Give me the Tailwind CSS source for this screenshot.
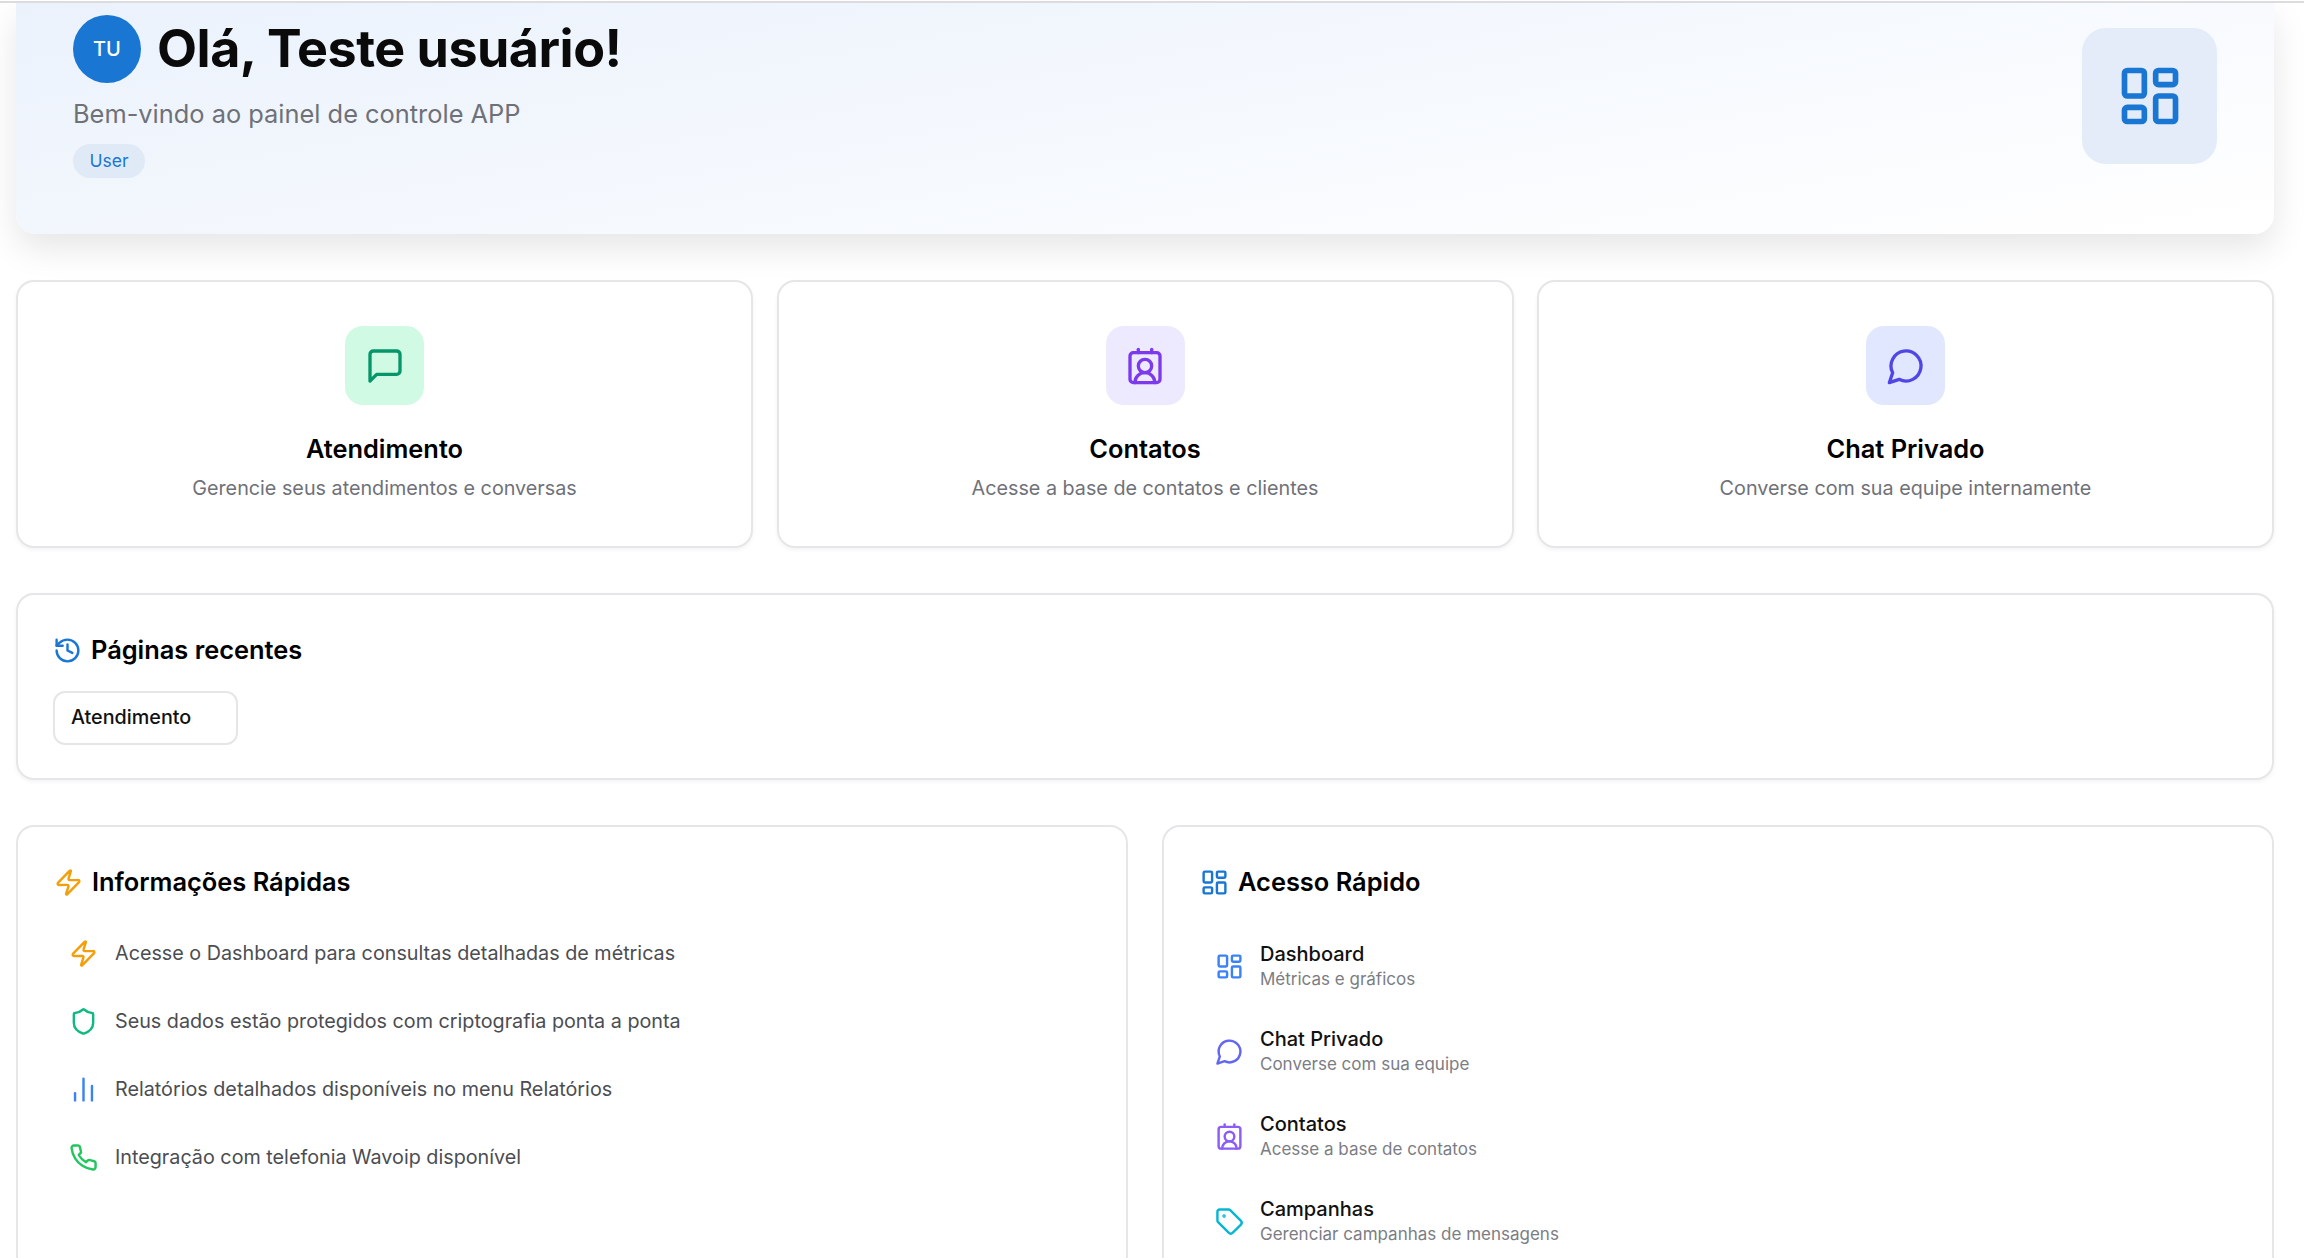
<!DOCTYPE html>
<html lang="pt-BR">
<head>
    <meta charset="UTF-8">
    <meta name="viewport" content="width=device-width, initial-scale=1.0">
    <title>Painel</title>
    <script src="https://cdn.jsdelivr.net/npm/@tailwindcss/browser@4"></script>
</head>
<body class="h-screen overflow-hidden bg-white font-[Inter,sans-serif] text-black">
    <div class="h-[3px] bg-white border-b-2 border-[#dcdcde] relative z-10"></div>

    <div class="h-[1255px] overflow-hidden pl-[16px] pr-[30px]">
        <!-- hero -->
        <section class="h-[231px] rounded-b-[20px] bg-linear-[170deg] from-[#ebf2fc] to-white shadow-[0_14px_34px_rgba(0,0,0,0.10)] pl-[57px] pr-[57px] flex justify-between items-start">
            <div class="pt-[12px]">
                <div class="flex items-center gap-[16px]">
                    <div class="w-[68px] h-[68px] rounded-full bg-[#1976d2] text-white flex items-center justify-center text-[20px] font-medium">TU</div>
                    <h1 class="text-[52px] leading-[68px] font-bold tracking-[-0.5px] text-[#0a0a0a]">Olá, Teste usuário!</h1>
                </div>
                <p class="mt-[15px] text-[25.4px] leading-[32px] text-[#6f7178]">Bem-vindo ao painel de controle APP</p>
                <span class="mt-[14px] h-[34px] w-[72px] rounded-full bg-[#e0eaf7] text-[#1976d2] text-[17.5px] flex items-center justify-center">User</span>
            </div>
            <div class="mt-[25px] w-[135px] h-[136px] rounded-[24px] bg-[#e3ecf8] flex items-center justify-center">
                <svg class="w-[68px] h-[68px] text-[#1976d2]" viewBox="0 0 24 24" fill="none" stroke="currentColor" stroke-width="2" stroke-linecap="round" stroke-linejoin="round"><rect width="7" height="9" x="3" y="3" rx="1"/><rect width="7" height="5" x="14" y="3" rx="1"/><rect width="7" height="9" x="14" y="12" rx="1"/><rect width="7" height="5" x="3" y="16" rx="1"/></svg>
            </div>
        </section>

        <!-- atalhos -->
        <div class="mt-[46px] grid grid-cols-3 gap-[23.5px]">
            <div class="h-[268px] rounded-[18px] border-2 border-[#e6e6e8] shadow-[0_2px_4px_rgba(0,0,0,0.05)] flex flex-col items-center pt-[44px]">
                <div class="w-[79px] h-[79px] rounded-[18px] bg-[#d1fae5] flex items-center justify-center">
                    <svg class="w-[40px] h-[40px] text-[#059669]" viewBox="0 0 24 24" fill="none" stroke="currentColor" stroke-width="2" stroke-linecap="round" stroke-linejoin="round"><path d="M21 15a2 2 0 0 1-2 2H7l-4 4V5a2 2 0 0 1 2-2h14a2 2 0 0 1 2 2z"/></svg>
                </div>
                <h3 class="mt-[27px] text-[25.4px] leading-[34px] font-semibold">Atendimento</h3>
                <p class="mt-[7px] text-[19.75px] leading-[30px] text-[#6f7178]">Gerencie seus atendimentos e conversas</p>
            </div>
            <div class="h-[268px] rounded-[18px] border-2 border-[#e6e6e8] shadow-[0_2px_4px_rgba(0,0,0,0.05)] flex flex-col items-center pt-[44px]">
                <div class="w-[79px] h-[79px] rounded-[18px] bg-[#ede9fe] flex items-center justify-center">
                    <svg class="w-[40px] h-[40px] text-[#7c3aed]" viewBox="0 0 24 24" fill="none" stroke="currentColor" stroke-width="2" stroke-linecap="round" stroke-linejoin="round"><path d="M16 2v2"/><path d="M17.915 22a6 6 0 0 0-12 0"/><path d="M8 2v2"/><circle cx="12" cy="12" r="4"/><rect x="3" y="4" width="18" height="18" rx="2"/></svg>
                </div>
                <h3 class="mt-[27px] text-[25.4px] leading-[34px] font-semibold">Contatos</h3>
                <p class="mt-[7px] text-[19.75px] leading-[30px] text-[#6f7178]">Acesse a base de contatos e clientes</p>
            </div>
            <div class="h-[268px] rounded-[18px] border-2 border-[#e6e6e8] shadow-[0_2px_4px_rgba(0,0,0,0.05)] flex flex-col items-center pt-[44px]">
                <div class="w-[79px] h-[79px] rounded-[18px] bg-[#e0e7ff] flex items-center justify-center">
                    <svg class="w-[40px] h-[40px] text-[#4f46e5]" viewBox="0 0 24 24" fill="none" stroke="currentColor" stroke-width="2" stroke-linecap="round" stroke-linejoin="round"><path d="M7.9 20A9 9 0 1 0 4 16.1L2 22Z"/></svg>
                </div>
                <h3 class="mt-[27px] text-[25.4px] leading-[34px] font-semibold">Chat Privado</h3>
                <p class="mt-[7px] text-[19.75px] leading-[30px] text-[#6f7178]">Converse com sua equipe internamente</p>
            </div>
        </div>

        <!-- recentes -->
        <section class="mt-[45px] h-[187px] rounded-[18px] border-2 border-[#e6e6e8] shadow-[0_2px_4px_rgba(0,0,0,0.05)] px-[35px] pt-[38px]">
            <div class="flex items-center gap-[9px]">
                <svg class="w-[29px] h-[29px] text-[#1976d2]" viewBox="0 0 24 24" fill="none" stroke="currentColor" stroke-width="2" stroke-linecap="round" stroke-linejoin="round"><path d="M3 12a9 9 0 1 0 9-9 9.75 9.75 0 0 0-6.74 2.74L3 8"/><path d="M3 3v5h5"/><path d="M12 7v5l4 2"/></svg>
                <h2 class="text-[25.4px] leading-[34px] font-semibold">Páginas recentes</h2>
            </div>
            <button class="mt-[24px] block w-[185px] h-[54px] rounded-[12px] border-2 border-[#e6e6e8] pl-[16px] text-left text-[19.75px] font-medium text-[#111]">Atendimento</button>
        </section>

        <!-- informacoes e acesso -->
        <div class="mt-[45px] grid grid-cols-2 gap-[34px]">
            <section class="h-[520px] rounded-[18px] border-2 border-[#e6e6e8] px-[36px] pt-[38px]">
                <div class="flex items-center gap-[9px]">
                    <svg class="w-[29px] h-[29px] text-[#f59e0b]" viewBox="0 0 24 24" fill="none" stroke="currentColor" stroke-width="2" stroke-linecap="round" stroke-linejoin="round"><path d="M4 14a1 1 0 0 1-.78-1.63l9.9-10.2a.5.5 0 0 1 .86.46l-1.92 6.02A1 1 0 0 0 13 10h7a1 1 0 0 1 .78 1.63l-9.9 10.2a.5.5 0 0 1-.86-.46l1.92-6.02A1 1 0 0 0 11 14z"/></svg>
                    <h2 class="text-[25.4px] leading-[34px] font-semibold">Informações Rápidas</h2>
                </div>
                <ul class="mt-[39px] pl-[15px] flex flex-col gap-[37px] text-[19.75px] leading-[31px] text-[#4b4d52]">
                    <li class="flex items-center gap-[17px]">
                        <svg class="w-[29px] h-[29px] text-[#f59e0b]" viewBox="0 0 24 24" fill="none" stroke="currentColor" stroke-width="2" stroke-linecap="round" stroke-linejoin="round"><path d="M4 14a1 1 0 0 1-.78-1.63l9.9-10.2a.5.5 0 0 1 .86.46l-1.92 6.02A1 1 0 0 0 13 10h7a1 1 0 0 1 .78 1.63l-9.9 10.2a.5.5 0 0 1-.86-.46l1.92-6.02A1 1 0 0 0 11 14z"/></svg>
                        Acesse o Dashboard para consultas detalhadas de métricas
                    </li>
                    <li class="flex items-center gap-[17px]">
                        <svg class="w-[29px] h-[29px] text-[#10b981]" viewBox="0 0 24 24" fill="none" stroke="currentColor" stroke-width="2" stroke-linecap="round" stroke-linejoin="round"><path d="M20 13c0 5-3.5 7.5-7.66 8.95a1 1 0 0 1-.67-.01C7.5 20.5 4 18 4 13V6a1 1 0 0 1 1-1c2 0 4.5-1.2 6.24-2.72a1.17 1.17 0 0 1 1.52 0C14.51 3.81 17 5 19 5a1 1 0 0 1 1 1z"/></svg>
                        Seus dados estão protegidos com criptografia ponta a ponta
                    </li>
                    <li class="flex items-center gap-[17px]">
                        <svg class="w-[29px] h-[29px] text-[#3b82f6]" viewBox="0 0 24 24" fill="none" stroke="currentColor" stroke-width="2" stroke-linecap="round" stroke-linejoin="round"><path d="M5 21v-6"/><path d="M12 21V3"/><path d="M19 21V9"/></svg>
                        Relatórios detalhados disponíveis no menu Relatórios
                    </li>
                    <li class="flex items-center gap-[17px]">
                        <svg class="w-[29px] h-[29px] text-[#22c55e]" viewBox="0 0 24 24" fill="none" stroke="currentColor" stroke-width="2" stroke-linecap="round" stroke-linejoin="round"><path d="M22 16.92v3a2 2 0 0 1-2.18 2 19.79 19.79 0 0 1-8.63-3.07 19.5 19.5 0 0 1-6-6 19.79 19.79 0 0 1-3.07-8.67A2 2 0 0 1 4.11 2h3a2 2 0 0 1 2 1.72 12.84 12.84 0 0 0 .7 2.81 2 2 0 0 1-.45 2.11L8.09 9.91a16 16 0 0 0 6 6l1.27-1.27a2 2 0 0 1 2.11-.45 12.84 12.84 0 0 0 2.81.7A2 2 0 0 1 22 16.92z"/></svg>
                        Integração com telefonia Wavoip disponível
                    </li>
                </ul>
            </section>

            <section class="h-[520px] rounded-[18px] border-2 border-[#e6e6e8] px-[36px] pt-[38px]">
                <div class="flex items-center gap-[9px]">
                    <svg class="w-[29px] h-[29px] text-[#1976d2]" viewBox="0 0 24 24" fill="none" stroke="currentColor" stroke-width="2" stroke-linecap="round" stroke-linejoin="round"><rect width="7" height="9" x="3" y="3" rx="1"/><rect width="7" height="5" x="14" y="3" rx="1"/><rect width="7" height="9" x="14" y="12" rx="1"/><rect width="7" height="5" x="3" y="16" rx="1"/></svg>
                    <h2 class="text-[25.4px] leading-[34px] font-semibold">Acesso Rápido</h2>
                </div>
                <ul class="mt-[42px] pl-[15px] flex flex-col gap-[35px]">
                    <li class="flex items-center gap-[16px]">
                        <svg class="w-[29px] h-[29px] text-[#3b82f6]" viewBox="0 0 24 24" fill="none" stroke="currentColor" stroke-width="2" stroke-linecap="round" stroke-linejoin="round"><rect width="7" height="9" x="3" y="3" rx="1"/><rect width="7" height="5" x="14" y="3" rx="1"/><rect width="7" height="9" x="14" y="12" rx="1"/><rect width="7" height="5" x="3" y="16" rx="1"/></svg>
                        <div>
                            <p class="text-[20px] leading-[26px] font-medium text-[#111]">Dashboard</p>
                            <p class="text-[17px] leading-[24px] text-[#7b7d84]">Métricas e gráficos</p>
                        </div>
                    </li>
                    <li class="flex items-center gap-[16px]">
                        <svg class="w-[29px] h-[29px] text-[#6366f1]" viewBox="0 0 24 24" fill="none" stroke="currentColor" stroke-width="2" stroke-linecap="round" stroke-linejoin="round"><path d="M7.9 20A9 9 0 1 0 4 16.1L2 22Z"/></svg>
                        <div>
                            <p class="text-[20px] leading-[26px] font-medium text-[#111]">Chat Privado</p>
                            <p class="text-[17px] leading-[24px] text-[#7b7d84]">Converse com sua equipe</p>
                        </div>
                    </li>
                    <li class="flex items-center gap-[16px]">
                        <svg class="w-[29px] h-[29px] text-[#8b5cf6]" viewBox="0 0 24 24" fill="none" stroke="currentColor" stroke-width="2" stroke-linecap="round" stroke-linejoin="round"><path d="M16 2v2"/><path d="M17.915 22a6 6 0 0 0-12 0"/><path d="M8 2v2"/><circle cx="12" cy="12" r="4"/><rect x="3" y="4" width="18" height="18" rx="2"/></svg>
                        <div>
                            <p class="text-[20px] leading-[26px] font-medium text-[#111]">Contatos</p>
                            <p class="text-[17px] leading-[24px] text-[#7b7d84]">Acesse a base de contatos</p>
                        </div>
                    </li>
                    <li class="flex items-center gap-[16px]">
                        <svg class="w-[29px] h-[29px] text-[#06b6d4]" viewBox="0 0 24 24" fill="none" stroke="currentColor" stroke-width="2" stroke-linecap="round" stroke-linejoin="round"><path d="M12.586 2.586A2 2 0 0 0 11.172 2H4a2 2 0 0 0-2 2v7.172a2 2 0 0 0 .586 1.414l8.704 8.704a2.426 2.426 0 0 0 3.42 0l6.58-6.58a2.426 2.426 0 0 0 0-3.42z"/><circle cx="7.5" cy="7.5" r=".5" fill="currentColor"/></svg>
                        <div>
                            <p class="text-[20px] leading-[26px] font-medium text-[#111]">Campanhas</p>
                            <p class="text-[17px] leading-[24px] text-[#7b7d84]">Gerenciar campanhas de mensagens</p>
                        </div>
                    </li>
                </ul>
            </section>
        </div>
    </div>
</body>
</html>
